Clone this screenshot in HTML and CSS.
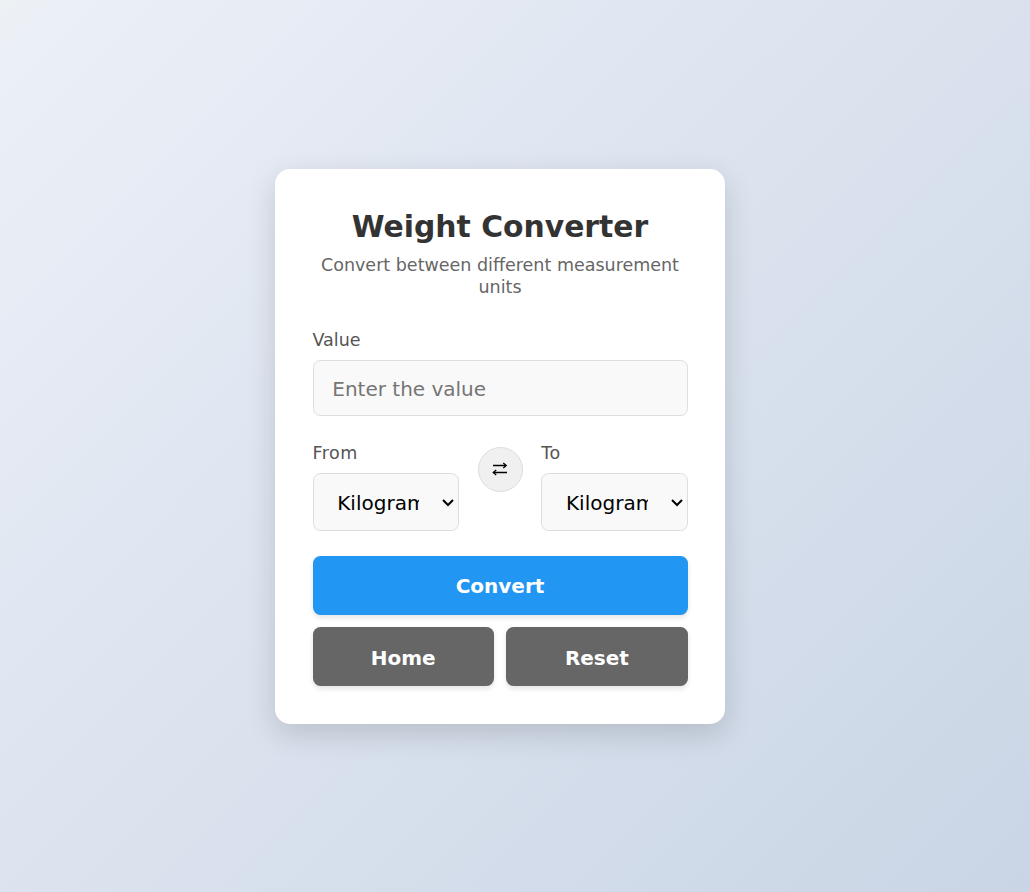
FILE: index.html
```html
<!DOCTYPE html>
<html lang="en">
<head>
<meta charset="UTF-8">
<meta name="viewport" content="width=device-width, initial-scale=1.0">
<title>Weight Converter</title>
<link rel="stylesheet" href="styles.css">
</head>
<body>
<main class="card">
  <header class="header">
    <h1 class="title">Weight Converter</h1>
    <p class="subtitle">Convert between different measurement units</p>
  </header>
  <div class="field">
    <label class="label" for="value">Value</label>
    <input class="input" id="value" type="number" placeholder="Enter the value">
  </div>
  <div class="units">
    <div class="unit">
      <label class="label" for="from">From</label>
      <select class="select" id="from"><option>Kilogram</option></select>
    </div>
    <button class="swap" type="button" aria-label="Swap units">
      <svg class="swap-icon" viewBox="0 0 16 14" aria-hidden="true">
        <path d="M1 3.5H14M1.5 10.5H15"/>
        <path d="M11.3 1L14.2 3.5L11.3 6M4.2 8L1.3 10.5L4.2 13"/>
      </svg>
    </button>
    <div class="unit">
      <label class="label" for="to">To</label>
      <select class="select" id="to"><option>Kilogram</option></select>
    </div>
  </div>
  <div class="actions">
    <button class="btn btn-primary" type="button">Convert</button>
    <button class="btn btn-secondary" type="button">Home</button>
    <button class="btn btn-secondary" type="button">Reset</button>
  </div>
</main>
</body>
</html>
```
FILE: styles.css
```css
* {
  box-sizing: border-box;
  margin: 0;
  padding: 0;
  font-family: "DejaVu Sans", sans-serif;
}

body {
  min-height: 100vh;
  display: flex;
  justify-content: center;
  align-items: center;
  padding-right: 30px;
  background: linear-gradient(135deg, #edf1f4, #ebeff7 4%, #c9d5e5);
}

.card {
  zoom: 1.25;
  width: 360px;
  height: 444px;
  padding: 30px;
  background: #fff;
  border-radius: 12px;
  box-shadow: 0 8px 24px rgba(0, 0, 0, 0.15);
}

.header {
  text-align: center;
  margin-bottom: 25.6px;
}

.title {
  font-size: 23.84px;
  line-height: 33.6px;
  color: #333;
  margin-bottom: 4.8px;
}

.subtitle {
  font-size: 14px;
  line-height: 17.6px;
  color: #666;
}

.label {
  display: block;
  font-size: 14px;
  line-height: 16.8px;
  color: #555;
  margin-bottom: 7.2px;
}

.field {
  margin-bottom: 20.8px;
}

.input,
.select {
  display: block;
  width: 100%;
  font-size: 16px;
  background: #f9f9f9;
  border: 1px solid #ddd;
  border-radius: 6px;
}

.input {
  height: 44.8px;
  padding: 1.6px 15px 0;
}

.select {
  height: 46.4px;
  padding: 1.6px 15px 0;
  color: #000;
}

.units {
  display: flex;
  gap: 15px;
  margin-bottom: 20px;
}

.unit {
  flex: 1;
  min-width: 0;
  padding-top: 0.8px;
}

.unit .label {
  letter-spacing: 0.4px;
}

.swap {
  flex: none;
  display: flex;
  align-items: center;
  justify-content: center;
  width: 36px;
  height: 36px;
  margin-top: 4px;
  padding-bottom: 1.6px;
  border: 1px solid #ddd;
  border-radius: 50%;
  background: #f0f0f0;
}

.swap-icon {
  width: 12.8px;
  height: 11.2px;
  fill: none;
  stroke: #000;
  stroke-width: 1.3;
}

.actions {
  display: grid;
  grid-template-columns: 1fr 1fr;
  gap: 9.6px 10px;
}

.btn {
  height: 47.2px;
  border: none;
  border-radius: 6px;
  background: #666;
  color: #fff;
  font-size: 16px;
  font-weight: 600;
  box-shadow: 0 2px 4px rgba(0, 0, 0, 0.1);
}

.btn-primary {
  grid-column: 1 / -1;
  background: #2196f3;
}

.btn-secondary {
  padding-top: 1.6px;
}
```
